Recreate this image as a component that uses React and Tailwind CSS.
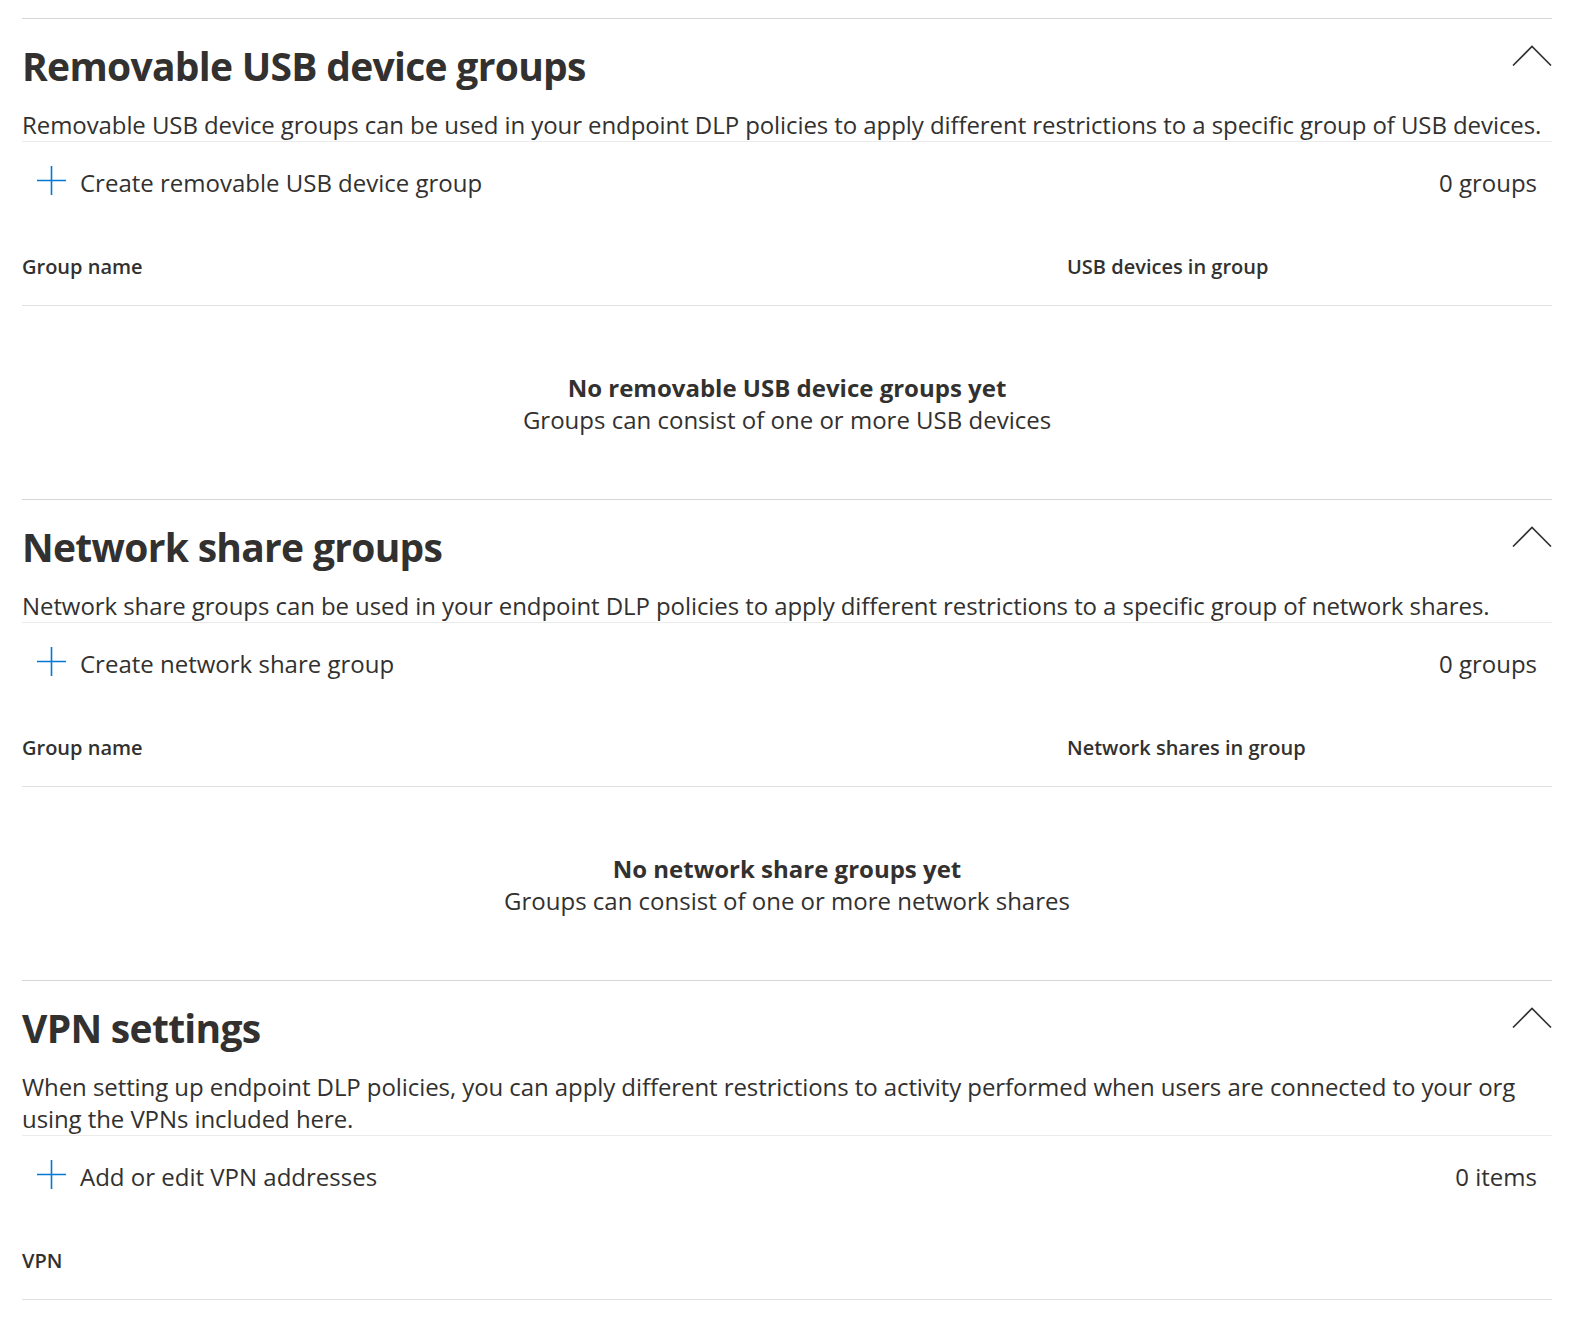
import React from "react";

function Plus() {
  return (
    <svg width="29" height="29" viewBox="0 0 29 29" className="shrink-0 -mt-[5px]">
      <path d="M0 14.5H29M14.5 0V29" stroke="#0078d4" strokeWidth="1.6" fill="none" />
    </svg>
  );
}

function Chevron() {
  return (
    <svg width="40" height="21" viewBox="0 0 40 21" className="shrink-0 mt-[26px]">
      <path d="M1 20.5L20 1.5L39 20.5" stroke="#323130" strokeWidth="1.6" fill="none" />
    </svg>
  );
}

function Section({ title, desc, action, count, col1, col2, emptyTitle, emptySub }) {
  return (
    <section className="border-t border-[#d6d6d6]">
      <div className="flex h-[90px] items-start justify-between">
        <h2 className="pt-[19px] text-[39px] font-bold leading-[56px] tracking-[-0.7px]">{title}</h2>
        <Chevron />
      </div>
      <p className="border-b border-[#ebebeb] text-[24px] leading-[32px] tracking-[-0.08px]">{desc}</p>
      <div className="flex h-[82px] items-center justify-between pl-[15px] pr-[15px]">
        <div className="flex items-center gap-[14px]">
          <Plus />
          <span className="text-[24px]">{action}</span>
        </div>
        <span className="text-[24px]">{count}</span>
      </div>
      <div className="grid h-[82px] grid-cols-[1045px_1fr] items-center border-b border-[#e0e0e0] pt-[5px] text-[20px] font-semibold">
        <span>{col1}</span>
        <span>{col2}</span>
      </div>
      {emptyTitle && (
        <div className="pb-[63px] pt-[66px] text-center text-[24px] leading-[32px]">
          <div className="font-bold">{emptyTitle}</div>
          <div>{emptySub}</div>
        </div>
      )}
    </section>
  );
}

export default function App() {
  return (
    <div className="min-h-[1320px] bg-white font-['Open_Sans','Noto_Sans',sans-serif] text-[#323130]">
      <div className="ml-[22px] mr-[38px] pt-[18px]">
        <Section
          title="Removable USB device groups"
          desc="Removable USB device groups can be used in your endpoint DLP policies to apply different restrictions to a specific group of USB devices."
          action="Create removable USB device group"
          count="0 groups"
          col1="Group name"
          col2="USB devices in group"
          emptyTitle="No removable USB device groups yet"
          emptySub="Groups can consist of one or more USB devices"
        />
        <Section
          title="Network share groups"
          desc="Network share groups can be used in your endpoint DLP policies to apply different restrictions to a specific group of network shares."
          action="Create network share group"
          count="0 groups"
          col1="Group name"
          col2="Network shares in group"
          emptyTitle="No network share groups yet"
          emptySub="Groups can consist of one or more network shares"
        />
        <Section
          title="VPN settings"
          desc="When setting up endpoint DLP policies, you can apply different restrictions to activity performed when users are connected to your org using the VPNs included here."
          action="Add or edit VPN addresses"
          count="0 items"
          col1="VPN"
          col2=""
        />
      </div>
    </div>
  );
}
